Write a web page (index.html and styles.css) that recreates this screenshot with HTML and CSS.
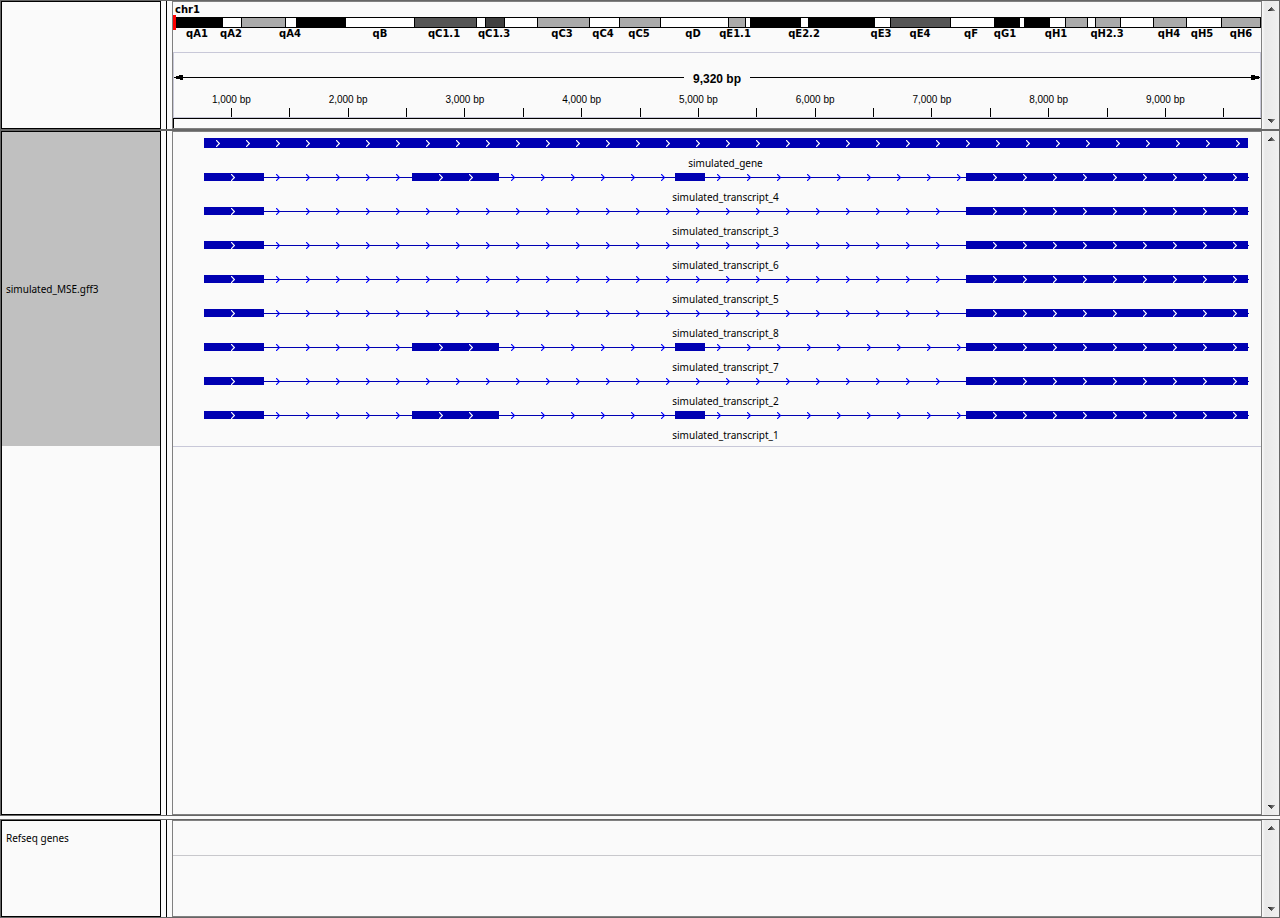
FILE: index.html
```html
<!DOCTYPE html>
<html lang="en">
<head>
<meta charset="utf-8">
<title>Genome browser</title>
<link rel="stylesheet" href="styles.css">
</head>
<body>
<main class="browser">
  <section class="panel panel-header" aria-label="Ruler">
    <div class="names"></div>
    <div class="splitter"></div>
    <div class="view">
      <div class="chromosome">chr1</div>
      <div class="ideogram">
        <div class="bands" id="bands"></div>
        <div class="locus"></div>
      </div>
      <div class="markers band-labels" id="band-labels"></div>
      <div class="ruler">
        <div class="span">
          <svg class="arrow" viewBox="0 0 9 7"><path d="M0 3h2V2h3V1h4v5H6V5H2V4H0z"/></svg>
          <span class="span-line"></span>
          <span class="span-label">9,320 bp</span>
          <span class="span-line"></span>
          <svg class="arrow" viewBox="0 0 9 7"><path d="M9 3H8V2H4V1H0v5h4V5h4V4h1z"/></svg>
        </div>
        <div class="markers ticks" id="ticks"></div>
      </div>
      <div class="roi"></div>
    </div>
    <div class="scrollbar">
      <button class="scroll-button" aria-label="Scroll up"><svg viewBox="0 0 7 4"><path fill="url(#arrow-fill)" d="M3 0h1v1h1v1h1v1h1v1H0V3h1V2h1V1h1z"/></svg></button>
      <button class="scroll-button" aria-label="Scroll down"><svg viewBox="0 0 7 4"><path fill="url(#arrow-fill)" d="M0 0h7v1H6v1H5v1H4v1H3V3H2V2H1V1H0z"/></svg></button>
    </div>
  </section>

  <section class="panel panel-tracks" aria-label="Tracks">
    <div class="names"><div class="track-name selected">simulated_MSE.gff3</div></div>
    <div class="splitter"></div>
    <div class="view"><div class="track" id="track"></div></div>
    <div class="scrollbar">
      <button class="scroll-button" aria-label="Scroll up"><svg viewBox="0 0 7 4"><path fill="url(#arrow-fill)" d="M3 0h1v1h1v1h1v1h1v1H0V3h1V2h1V1h1z"/></svg></button>
      <button class="scroll-button" aria-label="Scroll down"><svg viewBox="0 0 7 4"><path fill="url(#arrow-fill)" d="M0 0h7v1H6v1H5v1H4v1H3V3H2V2H1V1H0z"/></svg></button>
    </div>
  </section>

  <section class="panel panel-genes" aria-label="Genes">
    <div class="names"><div class="track-name reference">Refseq genes</div></div>
    <div class="splitter"></div>
    <div class="view"><div class="track-empty"></div></div>
    <div class="scrollbar">
      <button class="scroll-button" aria-label="Scroll up"><svg viewBox="0 0 7 4"><path fill="url(#arrow-fill)" d="M3 0h1v1h1v1h1v1h1v1H0V3h1V2h1V1h1z"/></svg></button>
      <button class="scroll-button" aria-label="Scroll down"><svg viewBox="0 0 7 4"><path fill="url(#arrow-fill)" d="M0 0h7v1H6v1H5v1H4v1H3V3H2V2H1V1H0z"/></svg></button>
    </div>
  </section>
</main>
<svg class="defs" aria-hidden="true">
  <defs>
    <linearGradient id="arrow-fill"><stop offset="0" stop-color="#111"/><stop offset="1" stop-color="#999"/></linearGradient>
    <symbol id="chevron" viewBox="0 0 4 7"><path fill="none" stroke-width="1.2" d="M0 0L3.4 3.5L0 7"/></symbol>
  </defs>
</svg>
<script src="script.js"></script>
</body>
</html>
```
FILE: styles.css
```css
* {
  box-sizing: border-box;
}

body {
  margin: 0;
  background: #fafafa;
  color: #000;
  font: 10px/12px "Liberation Sans", Arial, sans-serif;
}

.browser {
  display: flex;
  flex-direction: column;
  min-height: 100vh;
}

.defs {
  position: absolute;
  width: 0;
  height: 0;
}

/* Panels */
.panel {
  display: flex;
  border: 1px solid #666;
}

.panel-tracks {
  flex: 1;
}

.panel-genes {
  height: 99px;
  margin-top: 3px;
}

.names {
  flex: none;
  width: 160px;
  border: 1px solid #000;
}

.splitter {
  flex: none;
  width: 11px;
  padding: 0 5px;
  background: #000 content-box;
}

.view {
  flex: 1;
  min-width: 0;
  border: 1px solid #808080;
}

.scrollbar {
  display: flex;
  flex: none;
  flex-direction: column;
  justify-content: space-between;
  width: 17px;
  padding-left: 2px;
  background: linear-gradient(to right, #fafafa, #e8e8e8 3px, #f0f0f0);
}

.scroll-button {
  display: flex;
  align-items: center;
  justify-content: center;
  width: 15px;
  height: 16px;
  padding: 0;
  border: 0;
  background: none;
}

.scroll-button svg {
  width: 7px;
  height: 4px;
}

/* Markers centred on a position along the row */
.markers {
  display: flex;
}

.marker {
  display: flex;
  flex-direction: column;
  align-items: center;
  width: 0;
  white-space: nowrap;
}

.gap {
  flex-basis: 0;
  min-width: 0;
}

/* Ideogram */
.chromosome {
  height: 15px;
  padding: 2px 2px 0;
  font: bold 10px/12px "DejaVu Sans", sans-serif;
}

.ideogram {
  position: relative;
}

.bands {
  display: grid;
  height: 11px;
  border: solid #000;
  border-width: 1px 0;
  background: #fff;
}

.band-black {
  background: #000;
}

.band-light,
.band-medium,
.band-dark {
  border: solid #000;
  border-width: 0 1px;
  background: #aaa;
}

.band-medium {
  background: #555;
}

.band-dark {
  background: #404040;
}

.locus {
  position: absolute;
  top: -2px;
  left: 0;
  width: 3px;
  height: 15px;
  background: #f00;
}

.band-labels {
  height: 24px;
  font: bold 10px/12px "DejaVu Sans", sans-serif;
}

/* Ruler */
.ruler {
  height: 66px;
  border: 1px solid #c8c8d8;
  padding-top: 17px;
}

.span {
  display: flex;
  align-items: center;
  height: 14px;
}

.arrow {
  flex: none;
  width: 9px;
  height: 7px;
}

.span-line {
  flex: 1;
  height: 1px;
  background: #000;
}

.span-label {
  padding: 4px 9px 0;
  font: bold 12px/14px "Liberation Sans", Arial, sans-serif;
}

.ticks {
  margin: 10px -1px 0;
}

.tick {
  width: 1px;
  height: 9px;
  background: #000;
}

.tick-label {
  height: 14px;
}

.roi {
  height: 10px;
  border: solid #000;
  border-width: 1px 0 0 1px;
}

/* Tracks */
.track-name {
  display: flex;
  align-items: center;
  padding-left: 4px;
  font: 10px/13px "Noto Sans", sans-serif;
}

.selected {
  height: 314px;
  background: #c0c0c0;
}

.reference {
  height: 34px;
}

.track {
  display: flex;
  flex-direction: column;
  height: 315px;
  padding-top: 4px;
  border-bottom: 1px solid #c8c8d8;
}

.track-empty {
  height: 35px;
  border-bottom: 1px solid #c8c8cc;
}

.feature {
  display: grid;
  grid-template-columns: 31fr 1045fr 12fr;
  grid-template-rows: 14px 13px;
  row-gap: 7px;
  font: 10px/13px "Noto Sans", sans-serif;
}

.feature-model {
  display: grid;
  grid-column: 2;
  align-items: center;
}

.feature-label {
  grid-column: 2;
  padding-right: 2px;
  text-align: center;
}

.segment {
  display: flex;
  flex-wrap: wrap;
  column-gap: 26px;
  min-width: 0;
  height: 8px;
  overflow: hidden;
  align-content: flex-start;
}

.exon {
  padding-left: 27px;
  background: #0000b2;
  stroke: #fff;
}

.intron {
  padding-left: 12px;
  background: linear-gradient(#0000b2, #0000b2) 0 4px / 100% 1px no-repeat;
  stroke: #00f;
}

.gene {
  height: 10px;
  padding-left: 12px;
  background: #0000b2;
  stroke: #fff;
}

.end {
  padding: 0;
}

.chevron {
  width: 4px;
  height: 7px;
  margin-top: 1px;
}

.gene .chevron {
  margin-top: 2px;
}
```
FILE: script.js
```js
const bands = [
  ["black", 50], ["white", 18], ["light", 45], ["white", 10], ["black", 50],
  ["white", 68], ["medium", 63], ["white", 8], ["dark", 20], ["white", 32],
  ["light", 53], ["white", 29], ["light", 42], ["white", 67], ["light", 18],
  ["white", 4], ["black", 51], ["white", 7], ["black", 67], ["white", 15],
  ["medium", 61], ["white", 43], ["black", 26], ["white", 4], ["black", 26],
  ["white", 15], ["light", 23], ["white", 7], ["light", 26], ["white", 32],
  ["light", 34], ["white", 34], ["light", 40]
];

const bandLabels = [
  [24, "qA1"], [58, "qA2"], [117, "qA4"], [207, "qB"], [271, "qC1.1"],
  [321, "qC1.3"], [389, "qC3"], [430, "qC4"], [466, "qC5"], [520, "qD"],
  [562, "qE1.1"], [631, "qE2.2"], [708, "qE3"], [747, "qE4"], [798, "qF"],
  [832, "qG1"], [883, "qH1"], [934, "qH2.3"], [996, "qH4"], [1029, "qH5"],
  [1068, "qH6"]
];

// Segment lists alternate exon, intron, exon... and close with a short tail.
const long = [60, 148, 87, 176, 30, 261, 282, 1];
const short = [60, 702, 282, 1];
const transcripts = [[4, long], [3, short], [6, short], [5, short], [8, short], [7, long], [2, short], [1, long]];

function add(parent, className, text) {
  const node = document.createElement("div");
  node.className = className;
  if (text) node.textContent = text;
  parent.append(node);
  return node;
}

function setColumns(node, widths) {
  node.style.gridTemplateColumns = widths.map((width) => `minmax(0, ${width}fr)`).join(" ");
}

function addMarkers(row, items, total, fill) {
  let last = 0;
  for (const [position, text] of items) {
    add(row, "gap").style.flexGrow = position - last;
    fill(add(row, "marker"), text);
    last = position;
  }
  add(row, "gap").style.flexGrow = total - last;
}

function addSegment(model, kind, length) {
  const segment = add(model, "segment " + kind);
  const lead = kind === "exon" ? 27 : 12;
  const count = Math.floor((length - lead - 4) / 30) + 1;
  for (let i = 0; i < count; i++) {
    segment.insertAdjacentHTML("beforeend", '<svg class="chevron"><use href="#chevron"/></svg>');
  }
  if (count < 1) segment.classList.add("end");
}

function addFeature(name, segments, kinds) {
  const feature = add(document.getElementById("track"), "feature");
  const model = add(feature, "feature-model");
  setColumns(model, segments);
  segments.forEach((length, i) => addSegment(model, kinds[i % 2], length));
  add(feature, "feature-label", name);
}

const bandRow = document.getElementById("bands");
setColumns(bandRow, bands.map(([, width]) => width));
bands.forEach(([shade]) => add(bandRow, "band-" + shade));

addMarkers(document.getElementById("band-labels"), bandLabels, 1088, (node, text) => {
  node.textContent = text;
});

// The view starts 500 bp into the chromosome.
const ticks = [];
for (let offset = 500; offset < 9320; offset += 500) {
  const bp = offset + 500;
  ticks.push([offset, bp % 1000 ? "" : bp.toLocaleString("en-US") + " bp"]);
}
addMarkers(document.getElementById("ticks"), ticks, 9320, (node, text) => {
  add(node, "tick-label", text);
  add(node, "tick");
});

addFeature("simulated_gene", [1044, 1], ["gene", "spacer"]);
transcripts.forEach(([id, segments]) => addFeature("simulated_transcript_" + id, segments, ["exon", "intron"]));
```
